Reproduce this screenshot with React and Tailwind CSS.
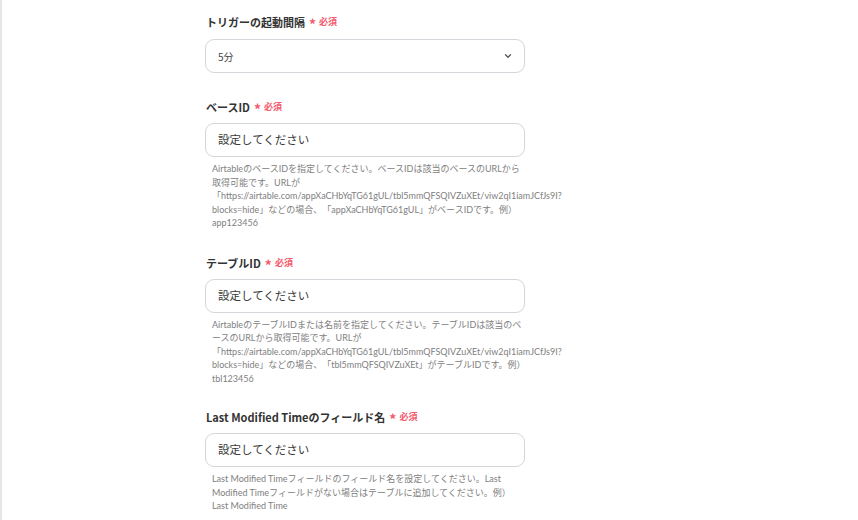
import React from "react";

const font = { fontFamily: '"Noto Sans CJK JP", "Noto Sans", sans-serif' };
const helpFont = { fontFamily: 'Lato, "Noto Sans CJK JP", sans-serif' };

function Label({ children }) {
  return (
    <div className="flex items-center h-[18px] pl-[1px]">
      <span className="text-[11px] font-bold text-[#333333] leading-[18px]">{children}</span>
      <span className="ml-[4px] text-[14px] font-bold text-[#f45a6d] leading-[18px] mt-[4px]">*</span>
      <span className="ml-[3px] text-[9px] font-bold text-[#f45a6d] leading-[18px]">必須</span>
    </div>
  );
}

function TextInput() {
  return (
    <div className="mt-[7px] h-[34px] w-[320px] rounded-[9px] border border-[#d5d6dc] bg-white flex items-center pl-[12px]">
      <span className="text-[11.5px] text-[#3a3a3a]">設定してください</span>
    </div>
  );
}

function Help({ lines }) {
  return (
    <div
      className="mt-[5px] pl-[7px] w-[320px] text-[9px] leading-[13.5px] text-[#808080] [text-spacing-trim:space-all]"
      style={helpFont}
    >
      {lines.map((l, i) => (
        <div key={i} className="whitespace-nowrap">{l}</div>
      ))}
    </div>
  );
}

export default function App() {
  return (
    <div className="min-h-[520px] w-full bg-white border-l-[2px] border-[#e6e6e6]" style={font}>
      <div className="pl-[203px] pt-[13px] flex flex-col">
        <section>
          <Label>トリガーの起動間隔</Label>
          <div className="mt-[8px] h-[34px] w-[320px] rounded-[9px] border border-[#d5d6dc] bg-white flex items-center justify-between pl-[12px] pr-[11px]">
            <span className="text-[10px] text-[#444444]">5分</span>
            <svg width="10" height="10" viewBox="0 0 24 24" fill="none" stroke="#555" strokeWidth="3" strokeLinecap="round" strokeLinejoin="round">
              <path d="M6 9l6 6 6-6" />
            </svg>
          </div>
        </section>

        <section className="mt-[25px]">
          <Label>ベースID</Label>
          <TextInput />
          <Help
            lines={[
              "AirtableのベースIDを指定してください。ベースIDは該当のベースのURLから",
              "取得可能です。URLが",
              "「https://airtable.com/appXaCHbYqTG61gUL/tbl5mmQFSQIVZuXEt/viw2qI1iamJCfJs9I?",
              "blocks=hide」などの場合、「appXaCHbYqTG61gUL」がベースIDです。例）",
              "app123456",
            ]}
          />
        </section>

        <section className="mt-[24px]">
          <Label>テーブルID</Label>
          <TextInput />
          <Help
            lines={[
              "AirtableのテーブルIDまたは名前を指定してください。テーブルIDは該当のベ",
              "ースのURLから取得可能です。URLが",
              "「https://airtable.com/appXaCHbYqTG61gUL/tbl5mmQFSQIVZuXEt/viw2qI1iamJCfJs9I?",
              "blocks=hide」などの場合、「tbl5mmQFSQIVZuXEt」がテーブルIDです。例）",
              "tbl123456",
            ]}
          />
        </section>

        <section className="mt-[23px]">
          <Label>Last Modified Timeのフィールド名</Label>
          <TextInput />
          <Help
            lines={[
              "Last Modified Timeフィールドのフィールド名を設定してください。Last",
              "Modified Timeフィールドがない場合はテーブルに追加してください。例）",
              "Last Modified Time",
            ]}
          />
        </section>
      </div>
    </div>
  );
}
